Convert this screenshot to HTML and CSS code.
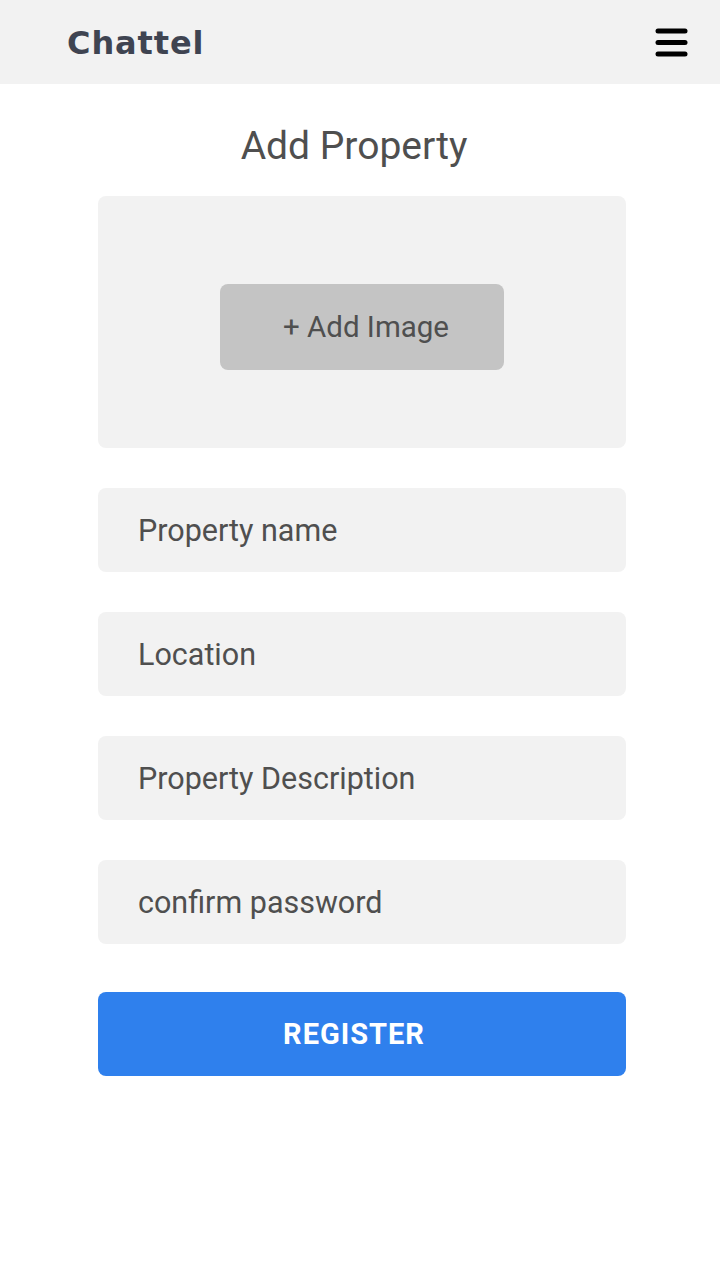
FILE: index.html
```html
<!DOCTYPE html>
<html>
<head>
<meta charset="utf-8">
<link rel="stylesheet" href="styles.css">
</head>
<body>
<header class="topbar">
  <div class="logo">Chattel</div>
  <button class="menu" aria-label="menu">
    <svg width="34" height="30" viewBox="0 0 34 30"><g stroke="#000" stroke-width="5" stroke-linecap="round"><line x1="3" y1="4" x2="30" y2="4"/><line x1="3" y1="15.5" x2="30" y2="15.5"/><line x1="3" y1="27" x2="30" y2="27"/></g></svg>
  </button>
</header>
<main class="content">
  <h1 class="title">Add Property</h1>
  <form class="form">
    <div class="image-box">
      <button type="button" class="add-image">+ Add Image</button>
    </div>
    <div class="field">Property name</div>
    <div class="field">Location</div>
    <div class="field">Property Description</div>
    <div class="field">confirm password</div>
    <button type="button" class="register">REGISTER</button>
  </form>
</main>
</body>
</html>
```
FILE: styles.css
```css
* { box-sizing: border-box; }
html, body { margin: 0; padding: 0; background: #fff; }
body { font-family: Roboto, "Noto Sans", sans-serif; }
.topbar {
  height: 84px;
  background: #f2f2f2;
  display: flex;
  align-items: center;
  justify-content: space-between;
  padding: 0 31px 0 67px;
}
.logo {
  font-family: "DejaVu Sans", Roboto, sans-serif;
  font-size: 32px;
  font-weight: 700;
  color: #3f4451;
  letter-spacing: 0.9px;
  line-height: 40px;
  margin-top: 2px;
}
.menu { background: none; border: none; padding: 0; display: flex; }
.content { display: flex; flex-direction: column; align-items: center; }
.title {
  margin: 39px 0 0;
  line-height: 46px;
  height: 46px;
  font-size: 39px;
  font-weight: 400;
  color: #4f4f4f;
  transform: translateX(-6px);
}
.form {
  width: 528px;
  margin-left: 4px;
  margin-top: 27px;
  display: flex;
  flex-direction: column;
  gap: 40px;
}
.image-box {
  height: 252px;
  background: #f2f2f2;
  border-radius: 8px;
  display: flex;
  align-items: flex-start;
  padding: 88px 0 0 122px;
}
.add-image {
  width: 284px;
  height: 86px;
  background: #c4c4c4;
  border: none;
  border-radius: 8px;
  font-family: inherit;
  font-size: 29.5px;
  color: #4f4f4f;
  padding: 0 0 0 8px;
}
.field {
  height: 84px;
  background: #f2f2f2;
  border-radius: 8px;
  display: flex;
  align-items: center;
  padding-left: 40px;
  font-size: 30.5px;
  color: #4f4f4f;
}
.register {
  margin-top: 8px;
  height: 84px;
  background: #2f80ed;
  border: none;
  border-radius: 8px;
  color: #fff;
  font-family: inherit;
  font-size: 29px;
  font-weight: 700;
  letter-spacing: 1px;
  padding: 0 16px 0 0;
}
```
